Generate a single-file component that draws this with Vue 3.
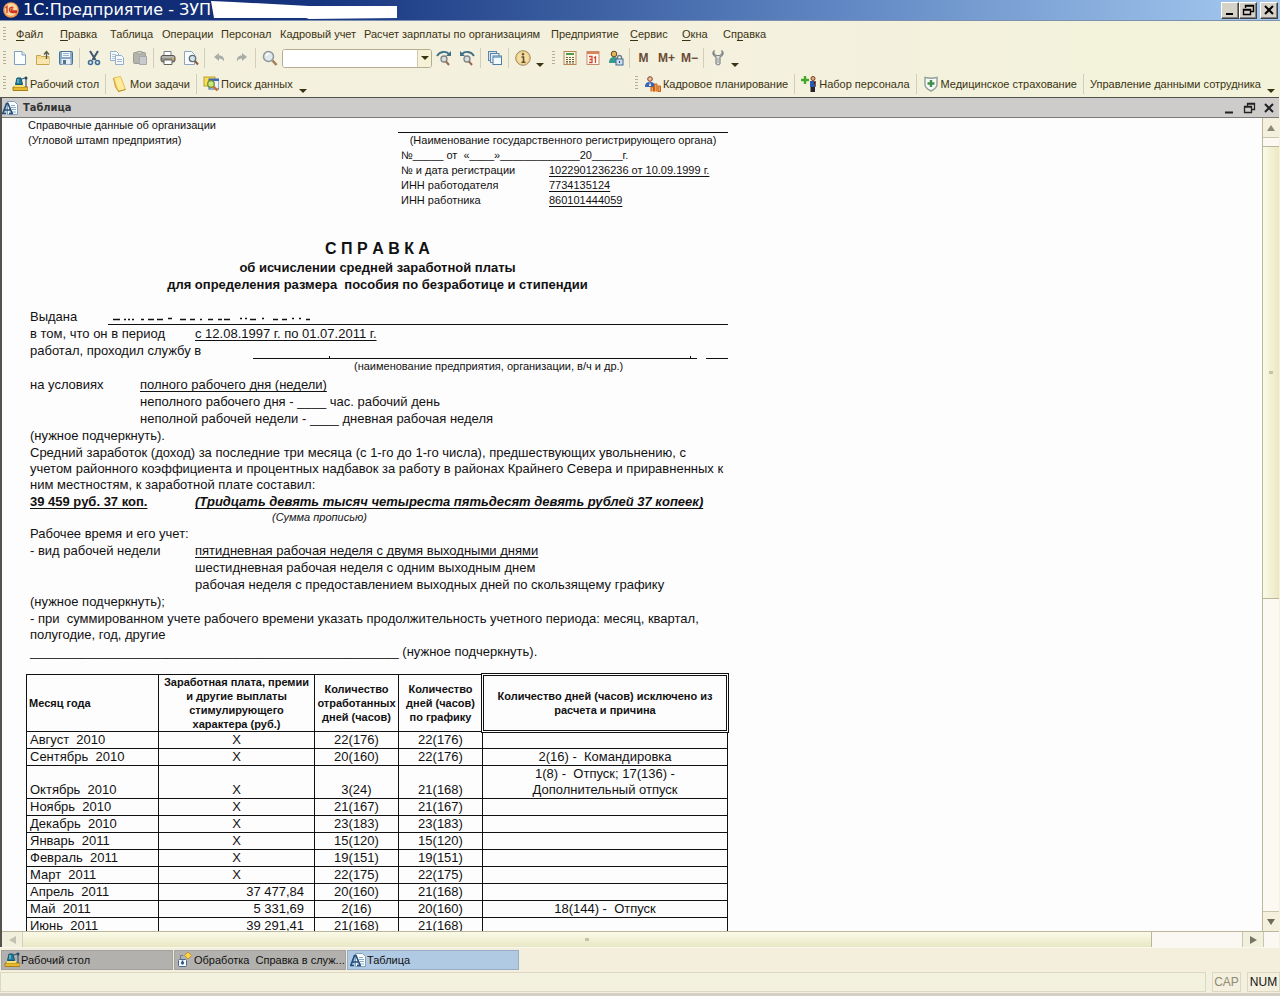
<script setup>
import { ref, h } from 'vue'

const menu = [
  ['', 'Ф', 'айл'], ['', 'П', 'равка'], ['Таблица', '', ''], ['Операции', '', ''], ['Персонал', '', ''],
  ['Кадровый учет', '', ''], ['Расчет зарплаты по организациям', '', ''], ['Предприятие', '', ''],
  ['', 'С', 'ервис'], ['', 'О', 'кна'], ['Сп', 'р', 'авка'],
]

const art = {
  page: '<path d="M2.500 1.500h7.500l3.500 3.500v9.500h-11z" fill="#fbfdff" stroke="#7f9fc0"/><path d="M10 1.500v3.500h3.500" fill="#dce8f4" stroke="#7f9fc0"/>',
  open: '<path d="M1.500 5.500h4l1 1h7.500v8h-12.500z" fill="#f3d98c" stroke="#c9a550"/><path d="M2 9h12v5h-12z" fill="#f8e6ae"/><path d="M11.500 9V2M9 4.500l2.500-3 2.500 3" fill="none" stroke="#5a5a44" stroke-width="1.300"/>',
  save: '<rect x="1.500" y="1.500" width="13" height="13" rx="1" fill="#86a9c9" stroke="#4a7196"/><rect x="4" y="2" width="8" height="5" fill="#f4f8fb"/><path d="M5 3.500h6M5 5.500h6" stroke="#a0b4c6"/><rect x="3.500" y="9" width="9" height="5.500" fill="#e6eff5"/><rect x="5" y="10" width="3" height="4" fill="#53718b"/>',
  cut: '<path d="M4 1l5.500 9M12 1L6.500 10" stroke="#3f566c" stroke-width="2"/><circle cx="4.500" cy="12.500" r="2" fill="none" stroke="#3c6c9c" stroke-width="1.600"/><circle cx="11.500" cy="12.500" r="2" fill="none" stroke="#3c6c9c" stroke-width="1.600"/>',
  copy: '<path d="M1.500 1.500h6l2 2v7h-8z" fill="#f6f9fb" stroke="#93aec6"/><path d="M3 4.500h4M3 6.500h4M3 8.500h3" stroke="#aec2d3"/><path d="M6.500 5.500h6l2 2v7h-8z" fill="#f6f9fb" stroke="#93aec6"/><path d="M8 9.500h5M8 11.500h5" stroke="#9db5ca"/>',
  paste: '<rect x="1.500" y="2.500" width="12" height="11" rx="1" fill="#b5b4ab" stroke="#9c9c96"/><path d="M5 1.500h5v2.500h-5z" fill="#d0d0ca" stroke="#a2a29c"/><path d="M7.500 6.500h7v8h-7z" fill="#c9cacc" stroke="#a6a8aa"/>',
  print: '<path d="M4 6V1.500h7V6" fill="#fff" stroke="#77808a"/><rect x="1" y="5.500" width="14" height="6.500" rx="2" fill="#93918a" stroke="#56554f"/><path d="M2 7h12" stroke="#d8d8d0"/><path d="M4 10h8v4.500h-8z" fill="#fff" stroke="#64645e"/><circle cx="13" cy="9" r="1" fill="#dfb23e"/>',
  preview: '<path d="M1.500 1.500h7l3 3v10h-10z" fill="#fafcfe" stroke="#8ca8c0"/><circle cx="9.500" cy="8.500" r="3.200" fill="#d4e2ea" stroke="#5c7078" stroke-width="1.300"/><path d="M12 11l3 3.500" stroke="#8c5b3a" stroke-width="2"/>',
  undo: '<path d="M3 7l5-4v2.500c4 0 5.500 2.500 5 6-1-2-2.500-3-5-3V11z" fill="#a8ada8"/>',
  redo: '<path d="M13 7L8 3v2.500c-4 0-5.500 2.500-5 6 1-2 2.500-3 5-3V11z" fill="#a8ada8"/>',
  find: '<circle cx="6.500" cy="6.500" r="5" fill="#dfe9ee" stroke="#90979a" stroke-width="1.500"/><path d="M4 6a3 3 0 0 1 3-2.500" stroke="#fff" stroke-width="1.400" fill="none"/><path d="M10.500 10.500l4 4.500" stroke="#a37d58" stroke-width="2.600"/>',
  next: '<path d="M1 6C4 1 10 1 13 4" fill="none" stroke="#3f7086" stroke-width="1.800"/><path d="M15 1v5h-5z" fill="#3f7086"/><circle cx="8" cy="9" r="3" fill="#d8dfe0" stroke="#7e8486" stroke-width="1.300"/><path d="M10 11.500l3 3.500" stroke="#9a6a50" stroke-width="2"/>',
  prev: '<path d="M15 6C12 1 6 1 3 4" fill="none" stroke="#3f7086" stroke-width="1.800"/><path d="M1 1v5h5z" fill="#3f7086"/><circle cx="8" cy="9" r="3" fill="#d8dfe0" stroke="#7e8486" stroke-width="1.300"/><path d="M10 11.500l3 3.500" stroke="#9a6a50" stroke-width="2"/>',
  windows: '<rect x="1.500" y="1.500" width="8" height="9" fill="#d7e4ee" stroke="#5d87a8"/><rect x="3.500" y="3.500" width="8.500" height="9" fill="#e6eff5" stroke="#5d87a8"/><rect x="6" y="6" width="8.500" height="8.500" fill="#f3f9fd" stroke="#4f7da2"/><path d="M6 7h8.500" stroke="#6d9fc6" stroke-width="1.500"/>',
  info: '<circle cx="8" cy="8" r="7.300" fill="#f1cf85" stroke="#9d8d6c"/><circle cx="8" cy="8" r="5.500" fill="#f7dea2"/><path d="M6.500 7h2v5M6.500 12.200h4" fill="none" stroke="#5c5234" stroke-width="1.600"/><circle cx="8" cy="4.200" r="1.200" fill="#5c5234"/>',
  calc: '<rect x="2" y="1.500" width="12" height="13" fill="#fbf7dc" stroke="#b98656"/><rect x="4" y="3" width="8" height="2" fill="#4f9a58"/><path d="M4 7.500h8M4 9.500h8M4 11.500h8M4 13h8" stroke="#6d5f4c" stroke-width="1.200" stroke-dasharray="2 1"/>',
  calendar: '<rect x="2" y="1.500" width="12" height="13" fill="#fffdf8" stroke="#c18d6c"/><path d="M2 3h12" stroke="#df8257" stroke-width="2"/><path d="M4 6.500h3v6H4M4.500 9.500h2.500M9 8l1.500-1.200v6.200" fill="none" stroke="#d8482c" stroke-width="1.300"/>',
  userlock: '<circle cx="6" cy="4" r="2.800" fill="#e8b659" stroke="#5e4b23"/><path d="M1 13c0-4 2-6 5-6s4 1 5 3v3z" fill="#389a8e"/><path d="M9.500 9V7.500a2 2 0 0 1 4 0V9" fill="none" stroke="#6d7d90" stroke-width="1.400"/><rect x="8" y="9" width="7" height="6" fill="#c7dcef" stroke="#476b91"/><path d="M11.500 11v2" stroke="#31506f"/>',
  wrench: '<path d="M4 1C2 3 3 6 6 7v6.500c1 2 3 2 4 0V7c3-1 4-4 2-6v3l-2 1.500H6L4 4z" fill="#dfe1df" stroke="#7e8587" stroke-width="1.200"/><path d="M8 8v5" stroke="#9aa3a3"/>',
  desk: '<path d="M1 11h15v3.500H1z" fill="#e7b92f" stroke="#a8811b"/><path d="M3 9h9v2H3z" fill="#fadf70"/><path d="M5 2h4l1.500 6.500h-7z" fill="#217c99" stroke="#14566e"/><path d="M6 3v4" stroke="#a5dbe6"/><path d="M10 3l4-1.500V11" fill="none" stroke="#39566f" stroke-width="1.200"/><circle cx="14" cy="2" r="1.500" fill="#274968"/>',
  note: '<path d="M1.500 2l7-1.500 5 13-7 2z" fill="#ffeb9a" stroke="#e3bd52"/><path d="M1.500 2l2 9 3 4.500" fill="#f3ca61" stroke="#cf9f31"/><path d="M6 15.500l7.500-2" stroke="#b9902f"/>',
  search: '<rect x="1" y="1" width="11" height="9" fill="#f8df57" stroke="#baa02d"/><rect x="6" y="3" width="10" height="10" fill="#eef3fb" stroke="#3b60a6"/><path d="M6 4h10" stroke="#3f69b8" stroke-width="2"/><circle cx="8" cy="8" r="3.300" fill="#c8e77c" stroke="#6e9130" stroke-width="1.300"/><path d="M10.500 10.500l4 4" stroke="#cd702d" stroke-width="2.400"/>',
  plan: '<circle cx="5" cy="3" r="2.300" fill="#efc19a" stroke="#843d2c"/><path d="M0 11c0-4 2-5 5-5s5 1 5 5z" fill="#3c63b4"/><path d="M5 6l-1 4h2z" fill="#fff"/><path d="M6 15.500V11h2.500v4.500M9.500 15.500V8H12v7.500M13 15.500V10h2.500v5.500z" fill="#f5a04a" stroke="#c4601f"/>',
  hire: '<path d="M4 0v8M0 4h8" stroke="#45a72c" stroke-width="2.400"/><circle cx="12" cy="2.500" r="2" fill="#e8ad7e" stroke="#753a20"/><path d="M9 5h5.500v6H9z" fill="#285aa9"/><path d="M9.500 11h4.500v5H9.500z" fill="#26242f"/><path d="M13 5.500h1.500v5" stroke="#a54230"/>',
  shield: '<path d="M2 1.500c4 1 8 1 12 0v7c0 3-3 5-6 6.500-3-1.500-6-3.500-6-6.500z" fill="#f7faf6" stroke="#90a09a" stroke-width="1.400"/><path d="M8 4v7M4.500 7.500h7" stroke="#3f8f49" stroke-width="2.400"/>',
  sheet: '<path d="M5.500 1.500h7l3 3v10h-10z" fill="#fbfdfe" stroke="#829fb9"/><path d="M9 5.500h4M9 7.500h5M10 9.500h4M7 12h7" stroke="#8caac4"/><path d="M1 13L4.500 3.500h1.500L10 13M2.500 10h5.500M0 13.500h4M7 13.500h4" fill="none" stroke="#214e7b" stroke-width="1.700"/>',
  process: '<path d="M11 0l3.500 3.500-3.500 3.500-3.500-3.500z" fill="#ffd44d" stroke="#c3942b"/><path d="M6 3.500H3.500v4" fill="none" stroke="#6b7a8b"/><rect x="1.500" y="7.500" width="8" height="7" rx="1" fill="#f4f9fd" stroke="#4a6c90"/><path d="M5.500 8.500v4M4 11h3" stroke="#234a76" stroke-width="1.600"/>',
  logo: '<circle cx="8" cy="8" r="7.800" fill="#f2994a"/><circle cx="8" cy="7.500" r="6.300" fill="#fbd9a3"/><path d="M2.500 6l1.500-1.500V11M10.500 5.500a2.700 2.700 0 1 0-1.500 5H14M10 7.500a1 1 0 1 0-1 1.500h5" fill="none" stroke="#cf3524" stroke-width="1.300"/>',
}
const Ico = (p) => h('svg', { viewBox: '0 0 16 16', width: 16, height: 16, 'aria-hidden': 'true', innerHTML: art[p.name] })
Ico.props = ['name']

const tools1 = [
  ['page', 'Новый'], ['open', 'Открыть'], ['save', 'Сохранить'], null,
  ['cut', 'Вырезать'], ['copy', 'Копировать'], ['paste', 'Вставить'], null,
  ['print', 'Печать'], ['preview', 'Просмотр'], null,
  ['undo', 'Отменить'], ['redo', 'Повторить'], null, ['find', 'Найти'],
]
const tools2 = [['next', 'Найти следующий'], ['prev', 'Найти предыдущий'], null, ['windows', 'Окна'], null, ['info', 'Справка']]
const tools3 = [['calc', 'Калькулятор'], ['calendar', 'Календарь'], ['userlock', 'Пользователь']]
const query = ref('')

const rows = [
  ['Август  2010', 'X', '22(176)', '22(176)', ''],
  ['Сентябрь  2010', 'X', '20(160)', '22(176)', '2(16) -  Командировка'],
  ['Октябрь  2010', 'X', '3(24)', '21(168)', '1(8) -  Отпуск; 17(136) -\nДополнительный отпуск'],
  ['Ноябрь  2010', 'X', '21(167)', '21(167)', ''],
  ['Декабрь  2010', 'X', '23(183)', '23(183)', ''],
  ['Январь  2011', 'X', '15(120)', '15(120)', ''],
  ['Февраль  2011', 'X', '19(151)', '19(151)', ''],
  ['Март  2011', 'X', '22(175)', '22(175)', ''],
  ['Апрель  2011', '37 477,84', '20(160)', '21(168)', ''],
  ['Май  2011', '5 331,69', '2(16)', '20(160)', '18(144) -  Отпуск'],
  ['Июнь  2011', '39 291,41', '21(168)', '21(168)', ''],
]
</script>

<template>
  <div class="app">
    <header class="titlebar">
      <Ico name="logo" />
      <h1>1С:Предприятие - ЗУП</h1>
      <svg class="patch" width="186" height="18" viewBox="0 0 186 18" aria-hidden="true"><path d="M0 0L22 1 98 5 186 5V17L98 18 95 17H3z" fill="#fff" /></svg>
      <span class="winbtns">
        <button aria-label="Свернуть"><svg width="16" height="14" viewBox="0 0 16 14"><path d="M4 11h7" stroke="#000" stroke-width="2" /></svg></button>
        <button aria-label="Восстановить"><svg width="16" height="14" viewBox="0 0 16 14"><path d="M5.500 5V2.500h8v6H11M5 3h9M3.500 6.500h7v5h-7zM3 7h8" fill="none" stroke="#000" stroke-width="1.400" /></svg></button>
        <button class="close" aria-label="Закрыть"><svg width="16" height="14" viewBox="0 0 16 14"><path d="M4 3l8 8M12 3l-8 8" stroke="#000" stroke-width="2" /></svg></button>
      </span>
    </header>

    <div class="bars">
      <nav class="bar menubar">
        <i class="grip"></i>
        <div class="menu">
          <button v-for="m in menu" :key="m.join('')">{{ m[0] }}<u v-if="m[1]">{{ m[1] }}</u>{{ m[2] }}</button>
        </div>
      </nav>

      <div class="bar tools">
        <i class="grip"></i>
        <template v-for="(t, i) in tools1" :key="i">
          <button v-if="t" class="tool" :aria-label="t[1]"><Ico :name="t[0]" /></button>
          <i v-else class="sep"></i>
        </template>
        <div class="combo">
          <input v-model="query" type="text" aria-label="Строка поиска" />
          <button aria-label="Показать список"><i class="tri"></i></button>
        </div>
        <template v-for="(t, i) in tools2" :key="'b' + i">
          <button v-if="t" class="tool" :aria-label="t[1]"><Ico :name="t[0]" /></button>
          <i v-else class="sep"></i>
        </template>
        <button class="more" aria-label="Ещё"><i class="tri"></i></button>
        <i class="grip inner"></i>
        <button v-for="t in tools3" :key="t[0]" class="tool" :aria-label="t[1]"><Ico :name="t[0]" /></button>
        <i class="sep"></i>
        <button class="tool mem">M</button>
        <button class="tool mem">M+</button>
        <button class="tool mem">M−</button>
        <i class="sep"></i>
        <button class="tool" aria-label="Настройка"><Ico name="wrench" /></button>
        <button class="more" aria-label="Ещё"><i class="tri"></i></button>
      </div>

      <div class="bar panels">
        <i class="grip"></i>
        <button class="link first"><Ico name="desk" />Рабочий стол</button>
        <i class="sep"></i>
        <button class="link"><Ico name="note" />Мои задачи</button>
        <i class="sep"></i>
        <button class="link"><Ico name="search" />Поиск данных</button>
        <button class="more" aria-label="Ещё"><i class="tri"></i></button>
        <i class="fill"></i>
        <i class="grip inner"></i>
        <button class="link first"><Ico name="plan" />Кадровое планирование</button>
        <i class="sep"></i>
        <button class="link"><Ico name="hire" />Набор персонала</button>
        <i class="sep"></i>
        <button class="link"><Ico name="shield" />Медицинское страхование</button>
        <i class="sep"></i>
        <button class="link">Управление данными сотрудника</button>
        <button class="more" aria-label="Ещё"><i class="tri"></i></button>
      </div>
    </div>

    <section class="child">
      <div class="childbar">
        <Ico name="sheet" />
        <h2>Таблица</h2>
        <button aria-label="Свернуть"><svg width="16" height="16" viewBox="0 0 16 16"><path d="M4 12.500h8" stroke="#222" stroke-width="2" /></svg></button>
        <button aria-label="Восстановить"><svg width="16" height="16" viewBox="0 0 16 16"><path d="M6.500 6V3.500h7v6H11M6 4h8M3.500 6.500h7v6h-7zM3 7h8" fill="none" stroke="#222" stroke-width="1.300" /></svg></button>
        <button aria-label="Закрыть"><svg width="16" height="16" viewBox="0 0 16 16"><path d="M4 4l8 8M12 4l-8 8" stroke="#222" stroke-width="2" /></svg></button>
      </div>

      <div class="view">
        <main class="sheet">
          <div class="top small">
            <div>Справочные данные об организации<br />(Угловой штамп предприятия)</div>
            <div class="reg">
              <div class="blank"></div>
              <div class="center">(Наименование государственного регистрирующего органа)</div>
              <div class="pad">№_____ от&nbsp; «____»_____________20_____г.</div>
              <div class="pad pair"><span>№ и дата регистрации</span><span class="ul">1022901236236 от 10.09.1999 г.</span></div>
              <div class="pad pair"><span>ИНН работодателя</span><span class="ul">7734135124</span></div>
              <div class="pad pair"><span>ИНН работника</span><span class="ul">860101444059</span></div>
            </div>
          </div>

          <div class="heading">
            <h3>С П Р А В К А</h3>
            <p>об исчислении средней заработной платы</p>
            <p>для определения размера&nbsp; пособия по безработице и стипендии</p>
          </div>

          <div class="issued">
            <span>Выдана</span>
            <span class="rule"><svg width="200" height="5" viewBox="0 0 200 5" aria-hidden="true"><path d="M1 2.500h7M12 2.500h2M16 2.500h2M20 2.500h2M29 2.500h3M36 2.500h6M45 2.500h6M56 1.500h4M68 2.500h6M78 2.500h5M88 2.500h2M96 2.500h5M106 2.500h4M112 2.500h6M128 1.500h2M133 1.500h2M138 2.500h6M150 1.500h2M161 2.500h5M170 2.500h5M180 1.500h2M187 1.500h2M194 2.500h4" stroke="#111" stroke-width="1.400" /></svg></span>
          </div>
          <div class="row w165"><span>в том, что он в период</span><span class="ul">с 12.08.1997 г. по 01.07.2011 г.</span></div>
          <div class="issued work">
            <span>работал, проходил службу в</span>
            <span class="rule ticks"><i class="tick"></i><i class="tick"></i></span><span class="rule short"></span>
          </div>
          <div class="small caption">(наименование предприятия, организации, в/ч и др.)</div>

          <div class="row w110 gap"><span>на условиях</span><span><span class="ul">полного рабочего дня (недели)</span><br />неполного рабочего дня - ____ час. рабочий день<br />неполной рабочей недели - ____ дневная рабочая неделя</span></div>
          <p>(нужное подчеркнуть).</p>
          <p class="para">Средний заработок (доход) за последние три месяца (с 1-го до 1-го числа), предшествующих увольнению, с<br />учетом районного коэффициента и процентных надбавок за работу в районах Крайнего Севера и приравненных к<br />ним местностям, к заработной плате составил:</p>
          <div class="row w165 sum"><b class="ul">39 459 руб. 37 коп.</b><b class="ul it">(Тридцать девять тысяч четыреста пятьдесят девять рублей 37 копеек)</b></div>
          <div class="small it words">(Сумма прописью)</div>
          <p>Рабочее время и его учет:</p>
          <div class="row w165"><span>- вид рабочей недели</span><span><span class="ul">пятидневная рабочая неделя с двумя выходными днями</span><br />шестидневная рабочая неделя с одним выходным днем<br />рабочая неделя с предоставлением выходных дней по скользящему графику</span></div>
          <p>(нужное подчеркнуть);</p>
          <p class="para">- при&nbsp; суммированном учете рабочего времени указать продолжительность учетного периода: месяц, квартал,<br />полугодие, год, другие</p>
          <p>___________________________________________________ (нужное подчеркнуть).</p>

          <table>
            <colgroup><col class="c1" /><col class="c2" /><col class="c3" /><col class="c3" /><col /></colgroup>
            <thead>
              <tr>
                <th class="left">Месяц года</th>
                <th>Заработная плата, премии<br />и другие выплаты<br />стимулирующего<br />характера (руб.)</th>
                <th>Количество<br />отработанных<br />дней (часов)</th>
                <th>Количество<br />дней (часов)<br />по графику</th>
                <th class="active">Количество дней (часов) исключено из<br />расчета и причина</th>
              </tr>
            </thead>
            <tbody>
              <tr v-for="r in rows" :key="r[0]">
                <td class="left">{{ r[0] }}</td>
                <td :class="{ money: r[1] !== 'X' }">{{ r[1] }}</td>
                <td>{{ r[2] }}</td>
                <td>{{ r[3] }}</td>
                <td>{{ r[4] }}</td>
              </tr>
            </tbody>
          </table>
        </main>
        <div class="vscroll">
          <button aria-label="Вверх"><i class="tri up"></i></button>
          <i class="lead"></i>
          <i class="thumb"></i>
          <i class="track"></i>
          <button aria-label="Вниз"><i class="tri down"></i></button>
        </div>
      </div>
      <div class="hscroll">
        <button class="off" aria-label="Влево"><i class="tri lt"></i></button>
        <i class="thumb"></i>
        <i class="track"></i>
        <button aria-label="Вправо"><i class="tri rt"></i></button>
        <i class="corner"></i>
      </div>
    </section>

    <nav class="tasks">
      <button><Ico name="desk" />Рабочий стол</button>
      <button><Ico name="process" />Обработка&nbsp; Справка в служ...</button>
      <button class="on"><Ico name="sheet" />Таблица</button>
    </nav>
    <footer class="status">
      <span class="msg"></span><span class="cap">CAP</span><span class="num">NUM</span>
    </footer>
  </div>
</template>

<style>
html, body { margin: 0; background: #f4f0dd; }
</style>

<style scoped>
.app { height: 100vh; display: flex; flex-direction: column; overflow: hidden; background: #f5f1de; color: #111; font: 11px/16px "Liberation Sans", Arial, sans-serif; }
button { font: inherit; color: inherit; background: none; border: 0; padding: 0; margin: 0; white-space: pre; }
svg { display: block; flex: none; }
h1, h2, h3, p { margin: 0; }
i { display: block; font-style: normal; flex: none; }

.titlebar { flex: none; height: 21px; display: flex; align-items: center; padding: 0 2px 0 3px; background: linear-gradient(90deg, #0a246a 0%, #17357f 25%, #5f86c2 65%, #a6caf0 100%); border-bottom: 1px solid #7c90b0; box-sizing: border-box; }
.titlebar h1 { font: 16px/20px "DejaVu Sans", sans-serif; color: #fff; margin-left: 4px; white-space: pre; }
.winbtns { margin-left: auto; display: flex; }
.winbtns button { width: 18px; height: 17px; display: grid; place-items: center; background: #d6d2c8; border: 1px solid; border-color: #fff #404040 #404040 #fff; box-shadow: inset -1px -1px #808080; box-sizing: border-box; }
.winbtns .close { margin-left: 3px; }

.bars { flex: none; background: linear-gradient(90deg, #f5f1df, #f4f0de 50%, #f2f3da); padding: 1px 0 0; color: #3a3312; }
.bar { display: flex; align-items: center; height: 24px; }
.bar.panels { height: 27px; padding-right: 3px; }
.grip { width: 3px; height: 15px; margin: 0 2px 0 3px; background: repeating-linear-gradient(#b4ae98 0 1px, transparent 1px 3px); }
.grip.inner { margin: 0 3px 0 6px; }
.menu { display: grid; grid-template-columns: 44px 50px 52px 59px 59px 84px 187px 79px 52px 41px auto; margin-left: 8px; }
.menu button { text-align: left; }
u { text-underline-offset: 2px; }
.tool { width: 23px; height: 22px; display: grid; place-items: center; }
.sep { width: 1px; height: 20px; margin: 0 2px; background: #d2ceba; }
.mem { font-weight: bold; font-size: 12px; color: #6a4a34; }
.combo { display: flex; width: 148px; height: 17px; border: 1px solid #b5ad92; border-radius: 3px; background: #fff; margin-left: 1px; overflow: hidden; }
.combo input { flex: 1; min-width: 0; border: 0; padding: 0 3px; outline: none; font: inherit; background: #fff; }
.combo button { width: 14px; background: #f6f2d8; border-left: 1px solid #cfc8ae; display: grid; place-items: center; }
.tri { width: 0; height: 0; border: 4px solid transparent; border-top-color: #3a3312; border-bottom: 0; }
.more { width: 12px; height: 20px; display: flex; align-items: flex-end; justify-content: center; padding-bottom: 1px; box-sizing: border-box; }
.link { display: flex; align-items: center; gap: 2px; margin: 0 4px; }
.fill { flex: 1; }

.child { flex: 1; min-height: 0; display: flex; flex-direction: column; border-left: 2px solid #55534e; border-top: 1px solid #55534e; margin-right: 1px; }
.childbar { flex: none; height: 19px; display: flex; align-items: center; background: #cdccca; border-bottom: 1px solid #7c7b76; }
.childbar h2 { flex: 1; font: bold 11px/18px "DejaVu Sans Condensed", "DejaVu Sans", sans-serif; color: #333; margin-left: 5px; }
.childbar button { margin-right: 4px; }
.childbar button:last-child { margin-right: 2px; }
.view { flex: 1; min-height: 0; display: flex; justify-content: space-between; background: #fefdfe; }
.sheet { width: 727px; overflow: hidden; font-size: 13px; line-height: 17px; color: #111; white-space: pre; }
.small { font-size: 11px; line-height: 15px; }
.top { display: flex; padding-left: 26px; }
.top > div:first-child { flex: 1; }
.reg { width: 330px; margin-right: 1px; }
.blank { height: 14px; border-bottom: 1px solid #111; }
.center { text-align: center; }
.pad { padding-left: 3px; }
.pair { display: grid; grid-template-columns: 148px auto; justify-content: start; }
.ul { text-decoration: underline; text-decoration-skip-ink: none; text-underline-offset: 2px; text-decoration-thickness: 1px; }
.heading { margin: 31px 0 15px; padding-left: 24px; text-align: center; font-weight: bold; }
.heading h3 { font-size: 16px; line-height: 20px; }
.sheet > p { padding-left: 28px; }
.row { display: grid; justify-content: start; padding-left: 28px; }
.w165 { grid-template-columns: 165px auto; }
.w110 { grid-template-columns: 110px auto; }
.issued { display: flex; height: 17px; padding: 0 1px 0 28px; }
.issued > span:first-child { width: 78px; }
.issued .rule { flex: 1; height: 17px; display: flex; align-items: flex-end; box-sizing: border-box; border-bottom: 1px solid #111; }
.issued .rule svg { margin: 0 0 2px 4px; }
.issued.work > span:first-child { width: 223px; }
.issued .rule.short { flex: none; width: 22px; margin-left: 9px; }
.issued .ticks { justify-content: space-between; padding: 0 6px 0 76px; }
.tick { width: 1px; height: 2px; background: #111; }
.caption { padding-left: 352px; }
.gap { margin-top: 2px; }
.sheet > .para { line-height: 16px; margin: 1px 0 0; }
.it { font-style: italic; }
.words { padding-left: 270px; }

table { border-collapse: collapse; table-layout: fixed; width: 702px; margin: 14px 0 0 24px; }
.c1 { width: 132px; } .c2 { width: 156px; } .c3 { width: 84px; }
th, td { border: 1px solid #111; padding: 0; text-align: center; vertical-align: bottom; }
th { font-size: 11px; line-height: 14px; vertical-align: middle; }
td { line-height: 16px; height: 16px; }
td.left { text-align: left; padding-left: 3px; }
th.left { text-align: left; padding-left: 2px; }
td.money { text-align: right; padding-right: 10px; }
th.active { position: relative; }
th.active::after { content: ""; position: absolute; inset: -2px; border: 1px solid #111; box-shadow: inset 0 0 0 1px #fff, inset 0 0 0 2px #111; }

.vscroll { width: 16px; display: flex; flex-direction: column; border-left: 1px solid #b9b69c; background: #fbf9f1; }
.vscroll button { height: 20px; background: #f3f1dd; display: grid; place-items: center; border-bottom: 1px solid #c9c6ae; box-sizing: border-box; }
.vscroll button:last-child { border-bottom: 0; border-top: 1px solid #c9c6ae; }
.vscroll .lead { height: 8px; }
.vscroll .thumb { flex: 452; border: solid #b9b69c; border-width: 1px 0; background: radial-gradient(circle, #c9c3a0 0 2px, transparent 2px), linear-gradient(90deg, #fbfae8, #eae8c0); }
.vscroll .track { flex: 312; }
.tri.up { border-top: 0; border-bottom: 6px solid #8a8878; }
.tri.down { border-top: 6px solid #6c6a5c; }
.tri.lt { border: 4px solid transparent; border-left: 0; border-right: 7px solid #c4c2ae; }
.tri.rt { border: 4px solid transparent; border-right: 0; border-left: 7px solid #77756a; }
.hscroll { flex: none; height: 15px; display: flex; border-top: 1px solid #b9b69c; background: #fbf8f4; }
.hscroll button { width: 21px; background: #f1f0dc; display: grid; place-items: center; border-left: 1px solid #c9c6ae; box-sizing: border-box; }
.hscroll .off { border: 0; border-right: 1px solid #d4d1ba; }
.hscroll .thumb { flex: 1133; border-right: 1px solid #b9b69c; background: radial-gradient(circle, #c9c3a0 0 2px, transparent 2px), linear-gradient(#fbfae8, #e8e7c4); }
.hscroll .track { flex: 90; }
.hscroll .corner { width: 16px; border-left: 1px solid #c9c6ae; box-sizing: border-box; }

.tasks { flex: none; display: flex; gap: 1px; padding: 2px 1px; border-top: 1px solid #faf8ee; background: #f4efdd; }
.tasks button { width: 172px; height: 20px; display: flex; align-items: center; gap: 1px; padding-left: 2px; background: #b3b1ae; border: 1px solid #a3a19d; box-sizing: border-box; overflow: hidden; }
.tasks button.on { background: #b1cae4; border-color: #97adc4; }
.status { flex: none; display: flex; gap: 6px; padding-bottom: 1px; border-bottom: 3px solid #d3cfc2; background: #f4f0df; }
.status span { height: 18px; line-height: 18px; border: 1px solid #dcd8c2; text-align: center; font-size: 12px; }
.status .msg { flex: 1; background: #f3f2de; }
.status .cap { width: 27px; color: #8f8b70; }
.status .num { width: 31px; }
</style>
